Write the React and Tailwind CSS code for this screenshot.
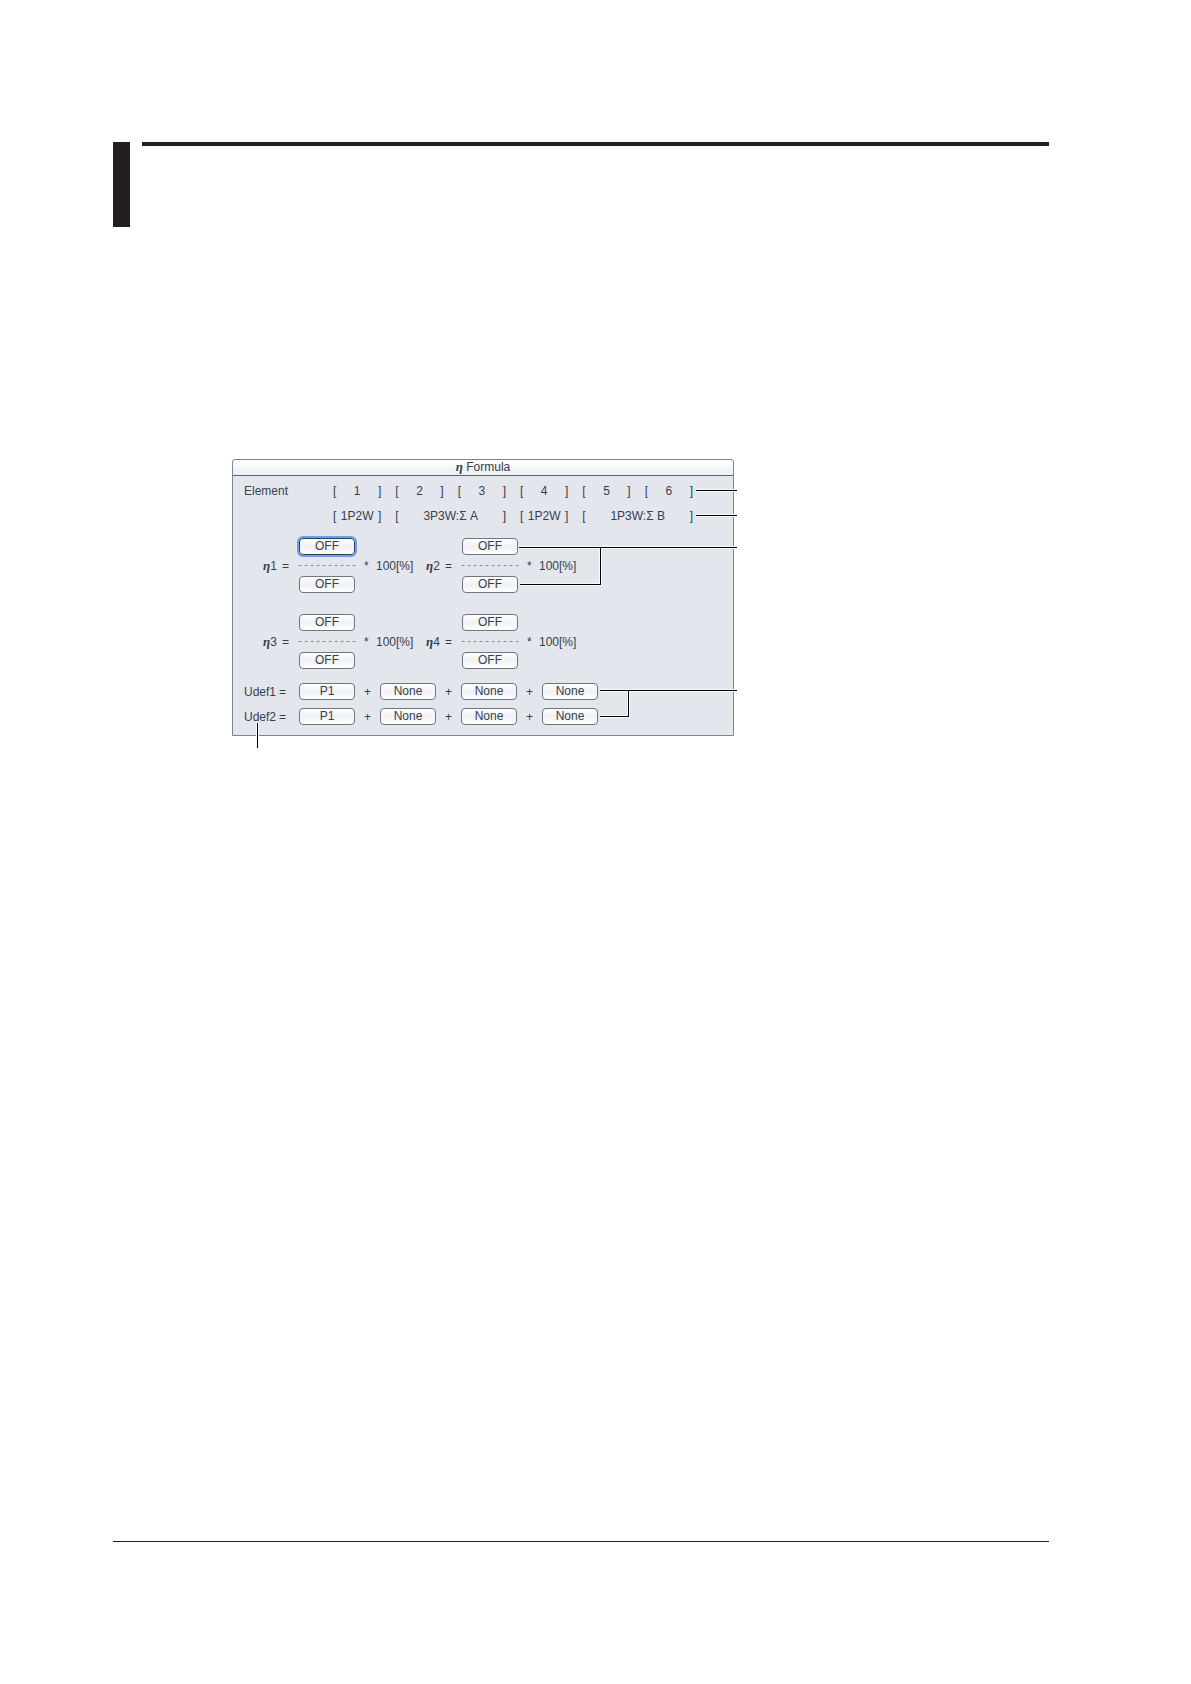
const Eta = () => <span className="font-['Liberation_Serif'] text-[13px] font-bold italic">η</span>;

function ValueButton({ children, label, focused = false }) {
  return (
    <button
      type="button"
      aria-label={label}
      className={
        focused
          ? "h-[17px] w-[56px] rounded-[4px] border border-[#33405c] bg-linear-to-b from-white via-[#f0f1f5] to-white leading-[15px] ring-2 ring-[#6f9fe6]"
          : "h-[17px] w-[56px] rounded-[4px] border border-[#6e7680] bg-linear-to-b from-white via-[#f0f1f5] to-white leading-[15px]"
      }
    >
      {children}
    </button>
  );
}

function Cell({ children, wide = false }) {
  return (
    <span className={wide ? "col-span-2 flex justify-between" : "flex justify-between"}>
      <span>[</span>
      <span>{children}</span>
      <span>]</span>
    </span>
  );
}

function Formula({ n, focused = false }) {
  return (
    <div className="flex items-center">
      <span className="w-[19px] whitespace-nowrap"><Eta />{n}</span>
      <span className="w-[13px]">=</span>
      <div className="flex w-[64px] flex-col items-center">
        <ValueButton label={`η${n} numerator`} focused={focused}>OFF</ValueButton>
        <span className="h-[21px] font-['Liberation_Mono'] text-[10px] leading-[21px] text-[#7c828c]">----------</span>
        <ValueButton label={`η${n} denominator`}>OFF</ValueButton>
      </div>
      <span className="ml-[5px] w-[12px]">*</span>
      <span>100[%]</span>
    </div>
  );
}

function UserDefined({ name }) {
  const values = ["P1", "None", "None", "None"];
  return (
    <div className="flex h-[17px] items-center">
      <span className="w-[35px]">{name}</span>
      <span className="w-[20px]">=</span>
      {values.map((value, i) => (
        <div key={i} className="flex items-center">
          {i > 0 && <span className="w-[25px] text-center">+</span>}
          <ValueButton label={`${name} term ${i + 1}`}>{value}</ValueButton>
        </div>
      ))}
    </div>
  );
}

function Callouts() {
  const paths = "M463 30H504 M463 55H504 M286 87H504 M287 124H367V87 M367 230H504 M367 256H395V230 M24 263V288";
  return (
    <svg aria-hidden="true" className="pointer-events-none absolute top-0 left-0 h-[292px] w-[508px]" viewBox="0 0 508 292" fill="none" shapeRendering="crispEdges">
      <path d={paths} stroke="#fafafd" strokeWidth="3" />
      <path d={paths} stroke="#000" strokeWidth="1" />
    </svg>
  );
}

export default function App() {
  return (
    <main className="bg-white px-[142px] pt-[142px] pb-[142px] font-['Liberation_Sans',sans-serif] text-[12px] text-[#35404b]">
      <header className="-ml-[29px] flex h-[85px] gap-3">
        <div className="w-[17px] bg-[#231f20]" />
        <div className="h-[4px] flex-1 bg-[#231f20]" />
      </header>

      <section className="relative mt-[232px] ml-[90px] w-[502px] rounded-t-[3px] border border-[#7d8790] bg-[#e4e6ee] pb-[10px]">
        <h1 className="h-[16px] rounded-t-[3px] border-b border-[#59636c] bg-linear-to-b from-white to-[#eceef5] text-center leading-[14px]">
          <Eta /> Formula
        </h1>

        <div className="px-[11px]">
          <div className="grid grid-cols-[89px_360px] gap-y-[9px] pt-[7px] leading-[16px]">
            <span>Element</span>
            <div className="grid grid-cols-6 gap-[14px]">
              <Cell>1</Cell><Cell>2</Cell><Cell>3</Cell><Cell>4</Cell><Cell>5</Cell><Cell>6</Cell>
            </div>
            <div className="col-start-2 grid grid-cols-6 gap-[14px]">
              <Cell>1P2W</Cell>
              <Cell wide>3P3W:Σ A</Cell>
              <Cell>1P2W</Cell>
              <Cell wide>1P3W:Σ B</Cell>
            </div>
          </div>

          <div className="mt-[14px] grid grid-cols-[163px_163px] gap-y-[21px] pl-[19px]">
            <Formula n={1} focused />
            <Formula n={2} />
            <Formula n={3} />
            <Formula n={4} />
          </div>

          <div className="mt-[14px] flex flex-col gap-2">
            <UserDefined name="Udef1" />
            <UserDefined name="Udef2" />
          </div>
        </div>
        <Callouts />
      </section>

      <footer className="mt-[805px] -ml-[29px] border-t border-[#231f20]" />
    </main>
  );
}
